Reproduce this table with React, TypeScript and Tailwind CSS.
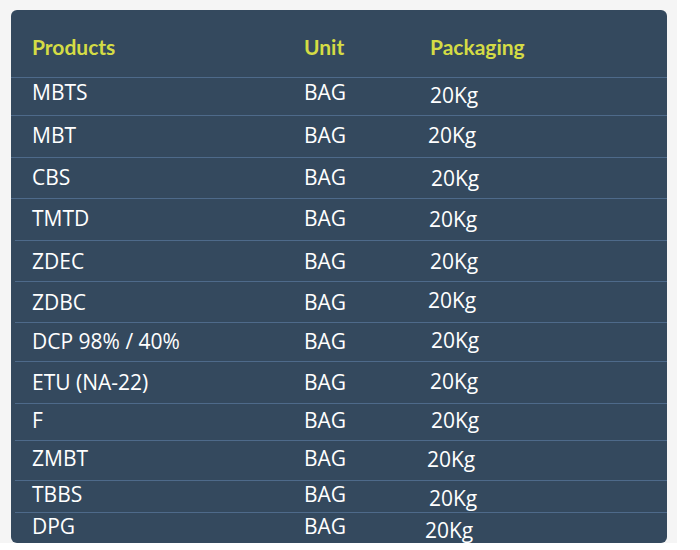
const rows = [
  { name: "MBTS", h: "h-[37px]", line: "", txt: "mb-[6px]", pk: "" },
  { name: "MBT", h: "h-[41px]", line: "", txt: "", pk: "ml-[-2px]" },
  { name: "CBS", h: "h-[40px]", line: "", txt: "", pk: "ml-[1px] mt-[2px]" },
  { name: "TMTD", h: "h-[41px]", line: "", txt: "", pk: "ml-[-1px] mt-[2px]" },
  { name: "ZDEC", h: "h-[40px]", line: "ml-[4px]", txt: "mt-[2px]", pk: "mt-[2px]" },
  { name: "ZDBC", h: "h-[40px]", line: "ml-[4px]", txt: "mt-[2px]", pk: "ml-[-2px] mb-[2px]" },
  { name: "DCP 98% / 40%", h: "h-[38px]", line: "ml-[4px]", txt: "", pk: "ml-[1px] mb-[2px]" },
  { name: "ETU (NA-22)", h: "h-[41px]", line: "ml-[4px]", txt: "mt-[2px]", pk: "" },
  { name: "F", h: "h-[36px]", line: "ml-[4px]", txt: "mb-[2px]", pk: "ml-[1px] mb-[2px]" },
  { name: "ZMBT", h: "h-[39px]", line: "ml-[4px]", txt: "mb-[2px]", pk: "ml-[-3px]" },
  { name: "TBBS", h: "h-[31px]", line: "ml-[4px]", txt: "mb-[10px]", pk: "ml-[-1px] mb-[2px]" },
  { name: "DPG", h: "h-[30px]", line: "ml-[4px]", txt: "mb-[12px]", pk: "ml-[-5px] mb-[4px]" },
]

export default function App() {
  return (
    <div className="min-h-[550px] w-[700px] bg-white">
      <div className="h-[543px] w-[677px] overflow-hidden bg-[#f5f5f5] pl-[11px] pr-[10px] pt-[10px]">
        <div className="h-[533px] rounded-md bg-[#34495e] font-['Open_Sans',sans-serif] text-[21px] leading-[26px] text-white">
          <div className="grid h-[67px] grid-cols-[272px_126px_1fr] items-center pl-[21px] pt-[7px] font-['Lato',sans-serif] text-[21px] font-bold text-[#d4dc45]">
            <div>Products</div>
            <div>Unit</div>
            <div>Packaging</div>
          </div>
          {rows.map((r) => (
            <div key={r.name} className={`border-t border-[#4e6a8a] ${r.line}`}>
              <div className={`grid grid-cols-[272px_126px_1fr] items-center pb-[3px] ${r.h} ${r.line ? "pl-[17px]" : "pl-[21px]"}`}>
                <div className={r.txt}>{r.name}</div>
                <div className={r.txt}>BAG</div>
                <div className={r.pk}>20Kg</div>
              </div>
            </div>
          ))}
        </div>
      </div>
    </div>
  )
}
